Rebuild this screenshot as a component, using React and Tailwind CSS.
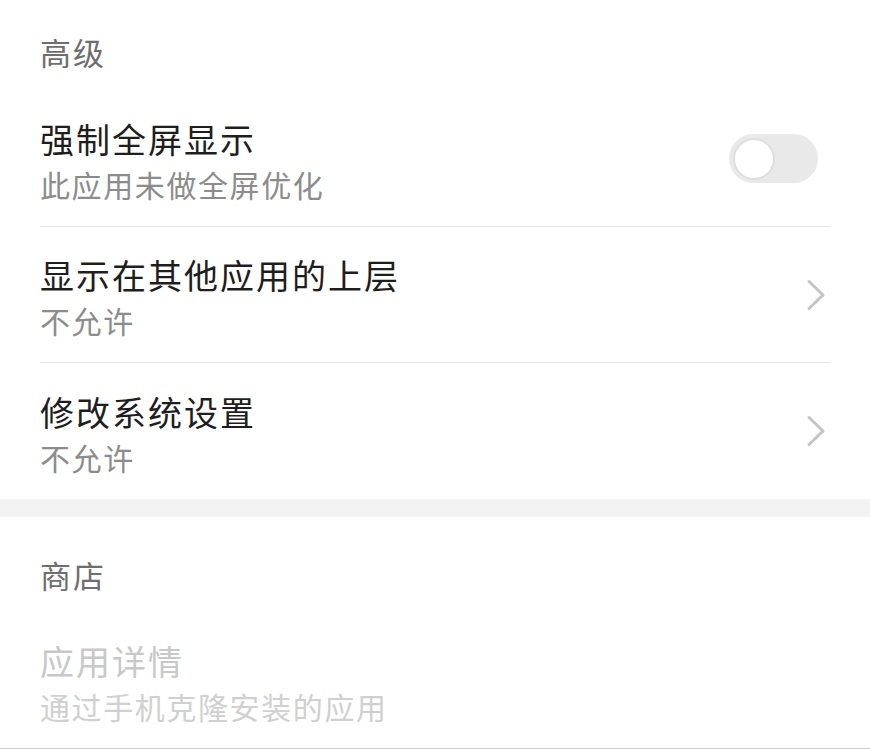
const font = { fontFamily: '"Noto Sans CJK SC", "Noto Sans", sans-serif' };

function Chevron() {
  return (
    <svg width="20" height="32" viewBox="0 0 20 32" fill="none" className="mr-[4px]">
      <path d="M3 2.5 L17 16 L3 29.5" stroke="#c4c4c4" strokeWidth="3" strokeLinecap="round" strokeLinejoin="round" />
    </svg>
  );
}

function Toggle() {
  return (
    <div className="mr-[12px] flex h-[49px] w-[89px] items-center rounded-full bg-[#e9e9e9] px-[4px]">
      <div className="h-[42px] w-[42px] rounded-full border-[2px] border-[#dedede] bg-white" />
    </div>
  );
}

function Row({ title, sub, right, disabled, divider = true, last }) {
  return (
    <div className={`flex items-center justify-between ${last ? 'h-[135px]' : 'h-[136px]'} ${divider ? 'border-b border-[#e3e3e3]' : ''}`}>
      <div className="flex flex-col pt-[3px]">
        <p className={`text-[34px] leading-[48px] tracking-[2px] ${disabled ? 'text-[#c8c8c8]' : 'text-[#1e1e1e]'}`}>{title}</p>
        <p className={`text-[30px] leading-[42px] tracking-[1.6px] ${disabled ? 'text-[#d0d0d0]' : 'text-[#8c8c8c]'}`}>{sub}</p>
      </div>
      {right}
    </div>
  );
}

function Heading({ children, className }) {
  return (
    <p className={`text-[31px] leading-[40px] tracking-[2px] text-[#6e6e6e] ${className}`}>{children}</p>
  );
}

export default function App() {
  return (
    <div className="h-[749px] w-[870px] overflow-hidden bg-white" style={font}>
      <section className="px-[40px]">
        <Heading className="pt-[32px] pb-[19px]">高级</Heading>
        <Row title="强制全屏显示" sub="此应用未做全屏优化" right={<Toggle />} />
        <Row title="显示在其他应用的上层" sub="不允许" right={<Chevron />} />
        <Row title="修改系统设置" sub="不允许" right={<Chevron />} divider={false} />
      </section>
      <div className="h-[18px] bg-[#f3f3f3]" />
      <section className="px-[40px]">
        <Heading className="pt-[38px] pb-[18px]">商店</Heading>
        <Row title="应用详情" sub="通过手机克隆安装的应用" disabled divider={false} last />
      </section>
      <div className="h-px bg-[#c8c8c8]" />
    </div>
  );
}
